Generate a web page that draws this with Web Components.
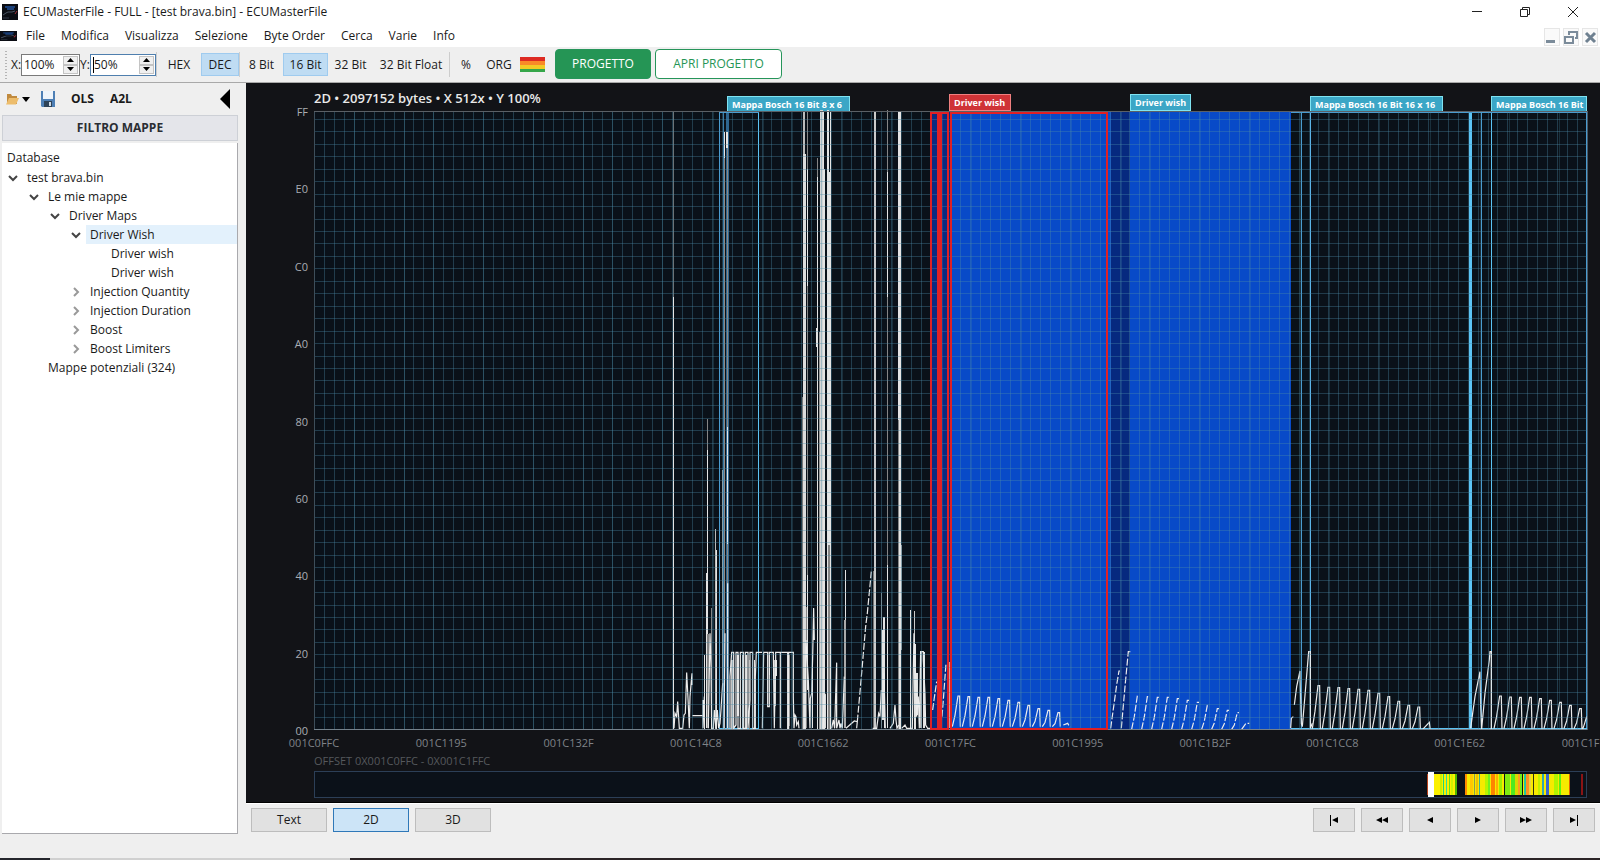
<!DOCTYPE html>
<html lang="it">
<head>
<meta charset="utf-8">
<title>ECUMasterFile - FULL - [test brava.bin] - ECUMasterFile</title>
<style>
  html, body { margin: 0; }
  body { font: 12px/16px "Open Sans", "Noto Sans", sans-serif; color: #1a1a1a; background: #efefef; }
</style>
</head>
<body>
<ecu-app></ecu-app>

<script>
const RESET = `
  *, *::before, *::after { box-sizing: border-box; }
  button, input { font: inherit; color: inherit; margin: 0; }
  button { padding: 0; border: 0; background: none; }
  svg { display: block; }
`;

function define(name, html, setup) {
  const template = document.createElement('template');
  template.innerHTML = `<style>${RESET}</style>${html}`;
  customElements.define(name, class extends HTMLElement {
    constructor() {
      super();
      this.attachShadow({ mode: 'open' }).append(template.content.cloneNode(true));
    }
    connectedCallback() {
      if (setup && !this.ready) { this.ready = true; setup(this, this.shadowRoot); }
    }
  });
}

/* ---------- small parts ---------- */

define('app-logo', `
  <style>:host { display: block; } svg { width: 100%; height: 100%; }</style>
  <svg viewBox="0 0 16 16" preserveAspectRatio="none" aria-hidden="true">
    <rect width="16" height="16" fill="#0b0d14"/>
    <path d="M3 3h10M5 5h7" stroke="#1a3f78" stroke-width="2"/>
    <path d="M1 11l3-2 2-1h4l3-1" stroke="#4a5462" fill="none"/>
    <path d="M1 14h6" stroke="#343b48"/><path d="M13 10l2-3" stroke="#a3303a"/>
  </svg>`);

define('title-bar', `
  <style>
    :host { display: flex; align-items: center; height: 24px; padding: 0 3px 0 2px; background: #fff; }
    app-logo { width: 16px; height: 16px; margin-right: 5px; }
    span { flex: 1; }
    button { width: 48px; height: 24px; display: grid; place-items: center; }
  </style>
  <app-logo></app-logo><span><slot></slot></span>
  <button aria-label="Riduci a icona"><svg width="12" height="12" stroke="#222" fill="none"><path d="M1 5.500h10"/></svg></button>
  <button aria-label="Ripristina"><svg width="12" height="12" stroke="#222" fill="none"><path d="M1.500 3.500h7v7h-7zM3.500 3V1.500h7v7H9"/></svg></button>
  <button aria-label="Chiudi"><svg width="12" height="12" stroke="#222" fill="none"><path d="M1 1l10 10M11 1L1 11"/></svg></button>`);

define('menu-bar', `
  <style>
    :host { display: flex; align-items: center; height: 23px; padding-right: 2px; background: #fff; }
    app-logo { width: 17px; height: 10px; }
    nav { display: flex; gap: 16px; flex: 1; padding-left: 9px; }
    .mdi { display: flex; gap: 3px; padding-top: 2px; }
    .mdi button { width: 16px; height: 18px; border: 1px solid #e6e6e6; background: #fafafa; display: grid; place-items: center; }
  </style>
  <app-logo></app-logo>
  <nav><button>File</button><button>Modifica</button><button>Visualizza</button><button>Selezione</button><button>Byte Order</button><button>Cerca</button><button>Varie</button><button>Info</button></nav>
  <div class="mdi">
    <button aria-label="Riduci finestra"><svg width="14" height="14"><path d="M1 11.500h9" stroke="#7b8b9a" stroke-width="3"/></svg></button>
    <button aria-label="Ripristina finestra"><svg width="14" height="14" fill="none" stroke="#7b8b9a" stroke-width="2"><path d="M1 7h8v6H1zM5 5V2h8v6h-2"/></svg></button>
    <button aria-label="Chiudi finestra"><svg width="14" height="14"><path d="M3 3l9 9M12 3l-9 9" stroke="#6f8191" stroke-width="3"/></svg></button>
  </div>`);

define('zoom-spin', `
  <style>
    :host { display: flex; align-items: center; }
    label { width: 10px; white-space: nowrap; }
    .box { display: flex; width: 59px; height: 22px; border: 1px solid #7a7a7a; background: #fff; padding: 1px; }
    :host([active]) .box { border-color: #4f7fae; width: 66px; }
    input { flex: 1; min-width: 0; border: 0; padding: 0 0 0 1px; background: none; outline: 0; }
    .steps { display: grid; grid-template-rows: 1fr 1fr; width: 15px; }
    .steps button { display: grid; place-items: center; background: #f0f0f0; border: 1px solid #c4c4c4; }
    .caret { width: 1px; margin: 1px 0 1px 1px; background: #000; display: none; }
    :host([active]) .caret { display: block; }
    :host([active]) input { padding-left: 0; }
  </style>
  <label for="v"></label>
  <div class="box"><i class="caret"></i><input id="v" type="text">
    <div class="steps">
      <button aria-label="Aumenta"><svg width="7" height="4"><path d="M0 4L3.500 0L7 4z"/></svg></button>
      <button aria-label="Diminuisci"><svg width="7" height="4"><path d="M0 0L3.500 4L7 0z"/></svg></button>
    </div></div>`,
  (el, root) => {
    root.querySelector('label').textContent = el.getAttribute('label');
    root.querySelector('input').value = el.getAttribute('value');
  });

define('tool-toggle', `
  <style>
    :host { display: block; }
    button { width: 100%; height: 23px; border: 1px solid transparent; white-space: nowrap; }
    :host([on]) button { background: #bfdcf3; border-color: #9fcbef; }
  </style>
  <button><slot></slot></button>`);

define('tool-bar', `
  <style>
    :host { display: flex; align-items: center; height: 36px; background: #efefef; border-bottom: 1px solid #a9a9a9; padding: 0 0 0 5px; }
    .grip { width: 2px; height: 28px; margin-right: 4px; background: repeating-linear-gradient(#b5b5b5 0 1px, transparent 1px 3px); }
    .sep { width: 1px; height: 25px; background: #cdcdcd; }
    .w-s { width: 38px; } .w-m { width: 45px; } .w-l { width: 76px; }
    .flag { width: 25px; height: 15px; margin: 0 10px 0 4px; background: linear-gradient(#dd2a22 0 4px, #f98a28 4px 8px, #f3cb25 8px 12px, #35a64a 12px); }
    .cta { height: 30px; margin-bottom: 2px; border: 1px solid #26955a; border-radius: 4px; }
    .solid { width: 96px; background: #259555; color: #fff; margin-right: 4px; }
    .line { width: 127px; background: #fff; color: #259555; }
  </style>
  <i class="grip"></i>
  <zoom-spin label="X:" value="100%"></zoom-spin><zoom-spin label="Y:" value="50%" active></zoom-spin>
  <i class="sep"></i>
  <tool-toggle style="width:44px">HEX</tool-toggle><tool-toggle class="w-s" on>DEC</tool-toggle>
  <i class="sep"></i>
  <tool-toggle style="width:43px">8 Bit</tool-toggle><tool-toggle class="w-m" on>16 Bit</tool-toggle><tool-toggle class="w-m">32 Bit</tool-toggle><tool-toggle class="w-l">32 Bit Float</tool-toggle>
  <i class="sep"></i>
  <tool-toggle style="width:32px">%</tool-toggle><tool-toggle style="width:34px">ORG</tool-toggle>
  <i class="flag"></i>
  <button class="cta solid">PROGETTO</button><button class="cta line">APRI PROGETTO</button>`);

/* ---------- map tree ---------- */

const TREE = [
  [0, 'open', 'test brava.bin'], [1, 'open', 'Le mie mappe'], [2, 'open', 'Driver Maps'],
  [3, 'open', 'Driver Wish', true], [4, '', 'Driver wish'], [4, '', 'Driver wish'],
  [3, 'shut', 'Injection Quantity'], [3, 'shut', 'Injection Duration'], [3, 'shut', 'Boost'],
  [3, 'shut', 'Boost Limiters'], [1, '', 'Mappe potenziali (324)'],
];

define('tree-row', `
  <style>
    :host { display: flex; height: 19px; }
    i { width: 21px; flex: none; display: grid; place-items: center; }
    span { flex: 1; padding-left: 4px; line-height: 19px; }
    :host([selected]) span { background: #e3f1fc; }
    svg { fill: none; stroke-width: 2; display: none; }
    :host([state=open]) .open, :host([state=shut]) .shut { display: block; }
  </style>
  <i><svg class="open" width="10" height="8" stroke="#444"><path d="M1 2l4 4 4-4"/></svg><svg class="shut" width="8" height="10" stroke="#999"><path d="M2 1l4 4-4 4"/></svg></i>
  <span><slot></slot></span>`,
  el => { el.style.paddingLeft = 21 * el.getAttribute('level') + 'px'; });

define('map-panel', `
  <style>
    :host { display: flex; flex-direction: column; width: 246px; padding: 0 8px 0 2px; }
    .tools { display: flex; align-items: center; height: 32px; padding: 0 8px 0 4px; font-weight: 700; }
    .tools button { height: 24px; }
    .open { display: flex; align-items: center; gap: 3px; margin-right: 11px; }
    .save, .ols { margin-right: 16px; }
    .fold { margin-left: auto; }
    .filter { height: 26px; border: 1px solid #cdd0d6; background: #e4e5ea; font-weight: 700; color: #2a2d33; }
    .tree { flex: 1; margin-top: 2px; background: #fff; border: solid #a9a9ad; border-width: 0 1px 1px 0; padding: 6px 0 0 0; }
    h2 { font: inherit; margin: 0 0 1px 5px; line-height: 18px; }
  </style>
  <div class="tools">
    <button class="open" aria-label="Apri">
      <svg width="13" height="14"><path d="M1 12V2h4l1 2h5v8z" fill="#c08a3e"/><path d="M0 12.500L3 6h10l-3 6.500z" fill="#edbd6c"/></svg>
      <svg width="8" height="5"><path d="M0 0h8L4 5z"/></svg>
    </button>
    <button class="save" aria-label="Salva"><svg width="14" height="16"><path d="M0 0h14v16H1l-1-1z" fill="#4d7fb5"/><path d="M2 0h10v8H2z" fill="#eef4fa"/><path d="M3 10h8v6H3z" fill="#2d4257"/><path d="M8 11h2v4H8z" fill="#cfdbe6"/></svg></button>
    <button class="ols">OLS</button><button>A2L</button>
    <button class="fold" aria-label="Comprimi pannello"><svg width="10" height="20"><path d="M10 0v20L0 10z"/></svg></button>
  </div>
  <button class="filter">FILTRO MAPPE</button>
  <div class="tree"><h2>Database</h2><div id="rows" role="tree"></div></div>`,
  (el, root) => {
    const rows = root.getElementById('rows');
    for (const [level, state, text, selected] of TREE) {
      const row = document.createElement('tree-row');
      row.setAttribute('role', 'treeitem');
      row.setAttribute('level', level);
      row.setAttribute('state', state);
      row.toggleAttribute('selected', !!selected);
      row.textContent = text;
      rows.append(row);
    }
  });

/* ---------- 2D chart ---------- */

const W = '#e4e4e4', G = '#858585';

/* vertical bars of the signal: x, top, bottom, width, colour */
const BARS = [
  [673,112,297,1,'#6c7478'],[673,297,729,1,W],[724,155,729,1,'#8e8985'],[726,132,148,2,W],[724,132,158,1,W],[727,148,729,1,'#8e8985'],[727,427,544,1,W],
  [722,470,690,1,'#aaa'],[707,419,450,1,G],[707,450,728,1,W],[706,573,728,1,W],[707,634,728,2,G],[711,608,728,1,G],[715,529,729,1,'#bbb'],[716,550,729,1,W],[704,655,729,1,W],
  [731,660,729,2,'#c4c4c4'],[737,655,716,2,W],[742,655,729,1,W],[746,655,729,1,W],[749,660,729,1,G],[754,660,729,1,W],[769,655,675,1,W],[774,660,706,2,'#bbb'],[775,660,676,2,W],[788,655,726,2,G],
  [803,112,154,2,'#bcbcbc'],[803,154,729,3,'#dcdcdc'],[802,397,729,1,'#777'],[807,112,169,1,G],[807,169,286,1,W],[807,286,580,1,G],[807,575,690,1,W],
  [806,607,728,1,G],[813,608,640,1,W],[812,657,728,1,W],[817,158,177,1,G],[817,177,729,1,W],[816,328,347,1,W],[820,110,729,3,'#d4d4d4'],[819,332,729,1,'#999'],
  [824,169,729,1,W],[823,112,729,1,W],[827,110,729,2,W],[829,172,545,2,W],[830,112,729,1,W],[828,545,729,2,G],
  [836,663,728,1,'#bbb'],[845,570,728,1,W],[844,620,728,2,'#aaa'],[873,571,729,2,'#777'],[874,112,729,2,'#ccc'],
  [881,593,728,1,G],[882,630,720,2,W],[883,617,650,2,W],[884,644,728,1,W],[887,110,172,1,G],[887,172,297,1,W],[887,297,565,1,G],[887,565,728,1,W],
  [898,112,729,3,W],[898,420,729,1,'#888'],[901,545,650,1,'#aaa'],[910,610,729,1,W],[914,611,729,1,'#ccc'],[914,644,729,2,W],[916,673,715,2,W],[920,652,728,2,'#bbb'],[923,652,728,2,W],
  [949,662,728,1,'#c9a0a4'],
];

/* traces given on a grid three times finer than the plot */
const TRACES = [
  [660, 400, 'M42 985L45 940L50 950L53 905L58 985H68L72 945L76 940L80 818L84 895L88 985L90 890L96 820V855M97 947H127M129 900V985L133 890M145 985L150 700L153 800L155 985H160L163 930L168 985L172 930L176 985L180 970L183 930L188 850M192 985L195 700M203 550V985M210 985V830L215 757H221V985L228 975V757H234V985H241V757H250V985H256V757H264V985L270 900V757H278V985H286V830L289 757H306M307 985L311 757H323V920H328V757H340L343 985L347 780V757H361V985M362 757H383V985H386V757H400V890L402 985L405 945L408 950L410 975L415 965L417 985M434 985L438 720L445 840L450 985L451 895L455 880L458 770L461 625L463 720M489 985L492 890L496 885V985M515 985L520 960L524 985L530 788V985L534 970L537 960L540 985L543 970L547 985L553 830M558 985L583 963L592 965L590 985M638 985H650L656 940L660 950L664 870M672 820L676 985M690 985L700 970L705 915L708 960L711 985L716 975M725 985L735 975L740 985H750L757 985L762 700L767 830L770 950L775 890L778 985L782 755H790V780L795 880L797 975L803 985H812'],
  [1250, 560, 'M122 505L124 475L130 470M133 435L140 380L150 333V350L154 490L157 500L163 430L176 275H181V505L187 490M662 505L668 460L675 410L690 335L692 440L695 508L705 400L718 300L720 275H724V508'],
];
const DASHED = [
  [660, 400, 'M592 965L605 820L617 680L622 640L634 515'],
  [900, 560, 'M98 450L102 420L110 365M126 470L130 420L138 310M632 505L648 390L650 375L657 333H660M664 505L676 370L685 275H691M1025 508L1038 490H1048M490 495L503 490L510 502'],
];

/* one tooth of a map row: slow rise, short top, optional drop */
function teeth(x, base, tops, drop) {
  return tops.map((t, i) => {
    const l = x + 30 * i;
    return `M${l} ${base}L${l + 8} ${(base + t) / 2 + 12}L${l + 17} ${t}H${l + 22}` + (drop ? `L${l + 24} ${base}` : '');
  }).join('');
}
DASHED.push([900, 560, teeth(695, 508, [408,410,412,412,416,421,427,436,446,451,458], false)]);
TRACES.push([900, 560, teeth(157, 500, [408,410,412,412,416,421,427,436,446,451,458], true)]);
TRACES.push([1250, 560, teeth(187, 506, [377,382,383,386,388,391,400,410,424,436,441], true) + 'M518 508L538 487L541 508']);
TRACES.push([1250, 560, teeth(732, 506, [408,411,412,412,416,421,427,436,446], true) + 'M998 508L1004 490L1010 470']);

/* edges of the blue-outlined maps: x, width, colour */
const EDGES = [
  [719,1,'#4a9cd0'],[723,1,'#3b7ca8'],[726,3,'#2e6690'],[758,1,'#5cc4f5'],
  [1301,1,'#4a9cd0'],[1310,1,'#5cb4e8'],[1469,3,'#5cc4f5'],[1481,1,'#4a9cd0'],[1491,1,'#5cc4f5'],[1586,1,'#4a9cd0'],
];

const HEAT = [
  [1427,1,'#b8431c'],[1434,23,'#fbf000'],[1440,2,'#c8f000'],[1443,1,'#20d878'],[1446,1,'#30d8a0'],[1449,1,'#60e818'],[1451,2,'#d0f400'],[1455,2,'#50b800'],
  [1465,105,'#f6ea00'],[1465,2,'#ff8a00'],[1470,3,'#ffc800'],[1474,1,'#8a9a50'],[1476,2,'#f0c000'],[1479,1,'#40b090'],[1485,4,'#b8f400'],[1488,2,'#70f020'],
  [1491,4,'#ff8400'],[1496,2,'#ffb000'],[1499,3,'#a0f000'],[1504,1,'#101810'],[1505,5,'#80ec10'],[1511,4,'#50e820'],[1515,3,'#d8d800'],[1518,2,'#ff9c20'],[1520,2,'#70f020'],
  [1522,1,'#101810'],[1524,2,'#20c8a0'],[1526,3,'#ff9020'],[1529,2,'#e8d040'],[1533,1,'#303010'],[1538,2,'#c0f000'],[1542,2,'#30a8b0'],[1546,3,'#3868d0'],[1554,4,'#b0f400'],[1559,2,'#60f010'],[1569,1,'#e06000'],
  [1581,2,'#8a1414'],
];

const LEVELS = ['FF','E0','C0','A0','80','60','40','20','00'];
const OFFSETS = ['001C0FFC','001C1195','001C132F','001C14C8','001C1662','001C17FC','001C1995','001C1B2F','001C1CC8','001C1E62','001C1FFC'];

define('map-tag', `
  <style>
    :host { position: absolute; bottom: 1px; height: 15px; padding: 0 5px 0 4px; border: solid #7fe3f2; border-width: 1px 1px 0;
      background: #3ba6c6; color: #fff; font: 700 9px/15px "Open Sans", "Noto Sans", sans-serif; white-space: nowrap; overflow: hidden; }
    :host([driver]) { height: 17px; border-width: 1px; }
    :host([selected]) { background: #cf3337; border-color: #f08080; }
  </style><slot></slot>`);

define('wave-chart', `
  <style>
    :host { display: flex; flex-direction: column; background: #121317; color: #a9adb3; overflow: hidden;
      border-bottom: 1px solid #000; padding: 0 13px 4px 68px; font-size: 11px; }
    .head { position: relative; height: 29px; font: 600 13px/16px "Open Sans", "Noto Sans", sans-serif; color: #e9e9e9; padding-top: 7px; }
    .body { flex: 1; display: grid; min-height: 300px; position: relative; }
    .levels { position: absolute; right: 100%; top: -7px; bottom: -8px; padding-right: 6px; display: flex; flex-direction: column;
      justify-content: space-between; text-align: right; line-height: 14px; }
    .plot { width: 100%; height: 100%; overflow: visible; min-height: 0; grid-area: 1/1; contain: size; }
    .offsets { display: grid; grid-template-columns: repeat(11, 1fr); margin: 5px -5% 0; text-align: center; line-height: 16px; color: #7f8287; }
    .range { line-height: 16px; margin: 2px 0 2px; color: #55585c; }
    .mini { width: 100%; height: 27px; border: 1px solid #2c3f57; background: #0b1119; }
    .mini svg { width: 100%; height: 100%; }
  </style>
  <div class="head">2D • 2097152 bytes • X 512x • Y 100%<div id="tags"></div></div>
  <div class="body">
    <div class="levels"></div>
    <svg class="plot" viewBox="314 112 1273 618" preserveAspectRatio="none"></svg>
  </div>
  <div class="offsets"></div>
  <div class="range">OFFSET 0X001C0FFC - 0X001C1FFC</div>
  <div class="mini"><svg viewBox="315 771 1271 25" preserveAspectRatio="none"></svg></div>`,
  (el, root) => {
    const q = s => root.querySelector(s);
    const rect = (x, y, w, h, fill, more = '') => `<rect x="${x}" y="${y}" width="${w}" height="${h}" fill="${fill}" ${more}/>`;
    const paths = (list, extra = '') => list.map(([x, y, d]) =>
      `<path transform="translate(${x} ${y}) scale(.3333)" d="${d}" fill="none" stroke="#ececec" vector-effect="non-scaling-stroke" ${extra}/>`).join('');

    let s = rect(314, 112, 1273, 618, '#0a1119');
    s += rect(930, 112, 22, 618, '#0a2a80') + rect(952, 112, 159, 618, '#084ac8') + rect(1111, 112, 19, 618, '#06297f') + rect(1130, 112, 161, 618, '#084ac8');
    s += EDGES.map(([x, w, c]) => rect(x, 112, w, 618, c)).join('');
    s += rect(719, 112, 40, 1, '#4a9cd0') + rect(719, 728, 40, 1, '#5cc4f5') + rect(1291, 112, 296, 1, '#4a9cd0') + rect(1291, 728, 296, 1, '#5cc4f5');
    s += BARS.map(([x, t, b, w, c]) => rect(x, t, w, b - t, c)).join('') + paths(TRACES, 'stroke-width="1.2"') + paths(DASHED, 'stroke-width="1.2" stroke-dasharray="7 2"');

    let grid = '', major = '';
    for (let i = 1; i < 128; i++) grid += `M${Math.round(314 + i * 9.945)}.5 112V730`;
    for (let i = 1; i < 50; i++) grid += `M314 ${Math.round(729 - i * 12.45)}.5H1587`;
    for (let x = 354; x < 1587; x += 179.3) for (const k of [0, 50, 79, 129]) if (x + k < 1587) major += `M${Math.round(x + k)}.5 112V730`;
    s += `<path d="${grid}" stroke="#4a8ba5" stroke-opacity=".36"/><path d="${major}" stroke="#4a8ba5" stroke-opacity=".25"/>`;

    s += rect(314, 111, 1274, 1, '#5b6066') + rect(314, 112, 1, 618, '#3d4e5a') + rect(314, 729, 1274, 1, '#75828c') + rect(1587, 112, 1, 618, '#4a5a68');
    const red = '#e02024';
    s += rect(930, 112, 2, 618, red) + rect(937, 112, 5, 618, red) + rect(947, 112, 2, 618, red) + rect(950, 112, 2, 618, red) + rect(1106, 112, 2, 618, red);
    s += rect(930, 112, 19, 2, red) + rect(950, 112, 158, 2, red) + rect(930, 728, 8, 2, red) + rect(941, 728, 8, 2, red) + rect(950, 728, 158, 2, red);
    q('.plot').innerHTML = s;

    q('.mini svg').innerHTML = HEAT.map(([x, w, c]) => rect(x, 773, w, 21, c)).join('') + rect(1428, 771, 6, 25, '#fff');
    q('.levels').innerHTML = LEVELS.map(t => `<span>${t}</span>`).join('');
    q('.offsets').innerHTML = OFFSETS.map(t => `<span>${t}</span>`).join('');

    const tags = [[727, 123, 'Mappa Bosch 16 Bit 8 x 6'], [949, 62, 'Driver wish', 'driver selected'], [1130, 61, 'Driver wish', 'driver'],
      [1310, 133, 'Mappa Bosch 16 Bit 16 x 16'], [1491, 96, 'Mappa Bosch 16 Bit']];
    q('#tags').innerHTML = tags.map(([x, w, t, a = '']) =>
      `<map-tag ${a} style="left:${((x - 314) / 12.73).toFixed(2)}%;width:${w}px">${t}</map-tag>`).join('');
  });

/* ---------- bottom bar ---------- */

define('view-bar', `
  <style>
    :host { display: flex; gap: 6px; height: 55px; padding: 4px 5px 0; background: #efefef; border-top: 1px solid #fff; }
    button { height: 24px; border: 1px solid #bdbdbd; background: #e1e1e1; }
    .view { width: 76px; }
    .view[aria-pressed=true] { background: #cce4f7; border-color: #2f78b8; }
    .nav { width: 42px; display: grid; place-items: center; }
    .first { margin-left: auto; }
  </style>
  <button class="view">Text</button><button class="view" aria-pressed="true">2D</button><button class="view">3D</button>
  <button class="nav first" aria-label="Inizio"><svg width="10" height="12"><path d="M1 1h1v11H1zM9 3v6L3 6z"/></svg></button>
  <button class="nav" aria-label="Indietro veloce"><svg width="12" height="12"><path d="M6 3v6L0 6zM12 3v6L6 6z"/></svg></button>
  <button class="nav" aria-label="Indietro"><svg width="6" height="12"><path d="M6 3v6L0 6z"/></svg></button>
  <button class="nav" aria-label="Avanti"><svg width="6" height="12"><path d="M0 3v6l6-3z"/></svg></button>
  <button class="nav" aria-label="Avanti veloce"><svg width="12" height="12"><path d="M0 3v6l6-3zM6 3v6l6-3z"/></svg></button>
  <button class="nav" aria-label="Fine"><svg width="10" height="12"><path d="M1 3v6l6-3zM8 1h1v11H8z"/></svg></button>`);

define('ecu-app', `
  <style>
    :host { display: flex; flex-direction: column; min-height: 100vh; }
    main { flex: 1; display: flex; }
    map-panel { flex: none; margin-bottom: 24px; }
    section { flex: 1; min-width: 0; display: flex; flex-direction: column; }
    wave-chart { flex: 1; }
    footer { height: 2px; background: linear-gradient(90deg, #25262c 50px, #d0d0d0 50px 350px, #2b2426 350px); }
  </style>
  <title-bar>ECUMasterFile - FULL - [test brava.bin] - ECUMasterFile</title-bar>
  <menu-bar></menu-bar>
  <tool-bar></tool-bar>
  <main><map-panel></map-panel><section><wave-chart></wave-chart><view-bar></view-bar></section></main>
  <footer></footer>`);
</script>
</body>
</html>
